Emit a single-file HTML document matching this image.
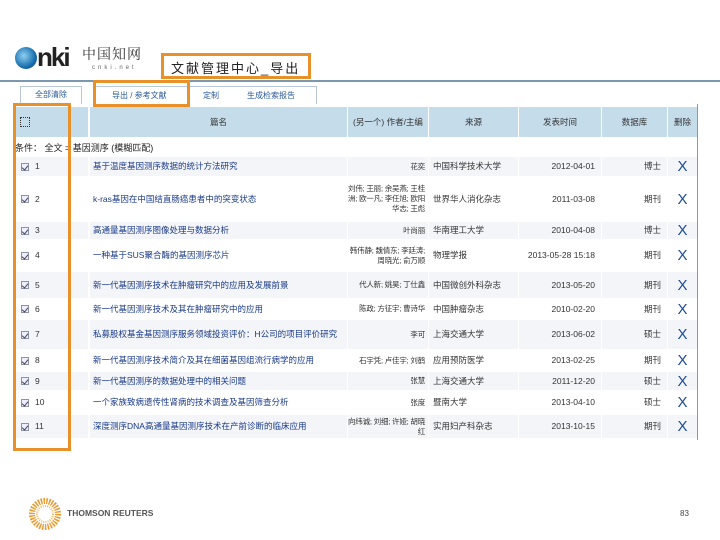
<!DOCTYPE html>
<html><head><meta charset="utf-8"><style>
*{margin:0;padding:0;box-sizing:border-box}
body{width:720px;height:540px;background:#fff;position:relative;overflow:hidden;font-family:"Liberation Sans","Noto Sans CJK SC",sans-serif;color:#333}
.a{position:absolute}
.t{font-size:9px;white-space:nowrap}
.ob{position:absolute;border:3px solid #e8902a}
.row{position:absolute;left:14px;width:683px}
.c{position:absolute;top:0;bottom:0;display:flex;align-items:center;font-size:8.5px;line-height:11px;overflow:hidden}
.au{font-size:7.5px;line-height:10px;letter-spacing:-0.2px}
.lnk{color:#1a3a8a}
.x{color:#1a4a9a;font-size:15px;justify-content:center}
.cb{width:8px;height:8px;border:1px solid #8a94a4;background:#eef;display:inline-block;margin-right:6px;position:relative}
.cb:after{content:"";position:absolute;left:1px;top:0;width:3px;height:5px;border-right:1px solid #445;border-bottom:1px solid #445;transform:rotate(40deg)}
</style></head><body>
<!-- logo -->
<div class="a" style="left:15px;top:47px;width:22px;height:22px;border-radius:50%;background:radial-gradient(circle at 40% 40%,#8fd0f0,#1a70b0 60%,#0b3a70)"></div>
<div class="a" style="left:37px;top:42px;font:bold 26px 'Liberation Sans',sans-serif;color:#222;letter-spacing:-2px">nki</div>
<div class="a" style="left:82px;top:44px;font-size:14px;color:#333;font-family:'Noto Serif CJK SC',serif;letter-spacing:1px">中国知网</div>
<div class="a" style="left:92px;top:65px;font-size:6px;color:#666;letter-spacing:3px">cnki.net</div>
<div class="a" style="left:171px;top:58px;font-size:13px;color:#222;letter-spacing:2px">文献管理中心_导出</div>
<div class="a" style="left:0;top:80px;width:720px;height:2px;background:#7a98b0"></div>
<!-- tabs -->
<div class="a" style="left:20px;top:86px;width:62px;height:18px;border:1px solid #b8c8d8;border-bottom:none;font-size:8px;text-align:center;line-height:16px;color:#2a5a9a">全部清除</div>
<div class="a" style="left:93px;top:86px;width:224px;height:18px;border:1px solid #b8c8d8;border-bottom:none"></div>
<div class="a t" style="left:112px;top:90px;font-size:8px;color:#2a5a9a">导出 / 参考文献</div>
<div class="a t" style="left:203px;top:90px;font-size:8px;color:#2a5a9a">定制</div>
<div class="a t" style="left:247px;top:90px;font-size:8px;color:#2a5a9a">生成检索报告</div>
<!-- right line -->
<div class="a" style="left:697px;top:104px;width:1px;height:336px;background:#8a9aaa"></div>
<!-- header -->
<div class="row" style="top:107px;height:30px">
<div class="c" style="left:0;width:74px;background:#c5dcea;padding-left:6px"><span style="width:10px;height:10px;border:1px dotted #333;display:inline-block"></span></div>
<div class="c" style="left:76px;width:257px;background:#c5dcea;justify-content:center">篇名</div>
<div class="c" style="left:334px;width:80px;background:#c5dcea;justify-content:center;text-align:center">(另一个) 作者/主编</div>
<div class="c" style="left:415px;width:89px;background:#c5dcea;justify-content:center">来源</div>
<div class="c" style="left:505px;width:82px;background:#c5dcea;justify-content:center">发表时间</div>
<div class="c" style="left:588px;width:65px;background:#c5dcea;justify-content:center">数据库</div>
<div class="c" style="left:654px;width:29px;background:#c5dcea;justify-content:center">删除</div>
</div>
<div class="a t" style="left:15px;top:141px;font-size:9px;color:#222">条件：  全文 = 基因测序 (模糊匹配)</div>
<div id="rows"></div>
<script>
var R=[
[157,21,"基于温度基因测序数据的统计方法研究","花奕","中国科学技术大学","2012-04-01","博士",1],
[178,44,"k-ras基因在中国结直肠癌患者中的突变状态","刘伟; 王丽; 余吴燕; 王桂洲; 欧一凡; 李任旭; 欧阳华志; 王彪","世界华人消化杂志","2011-03-08","期刊",0],
[222,19,"高通量基因测序图像处理与数据分析","叶尚丽","华南理工大学","2010-04-08","博士",1],
[241,31,"一种基于SUS聚合酶的基因测序芯片","韩伟静; 魏倩东; 李廷涛; 周晓光; 俞万顺","物理学报","2013-05-28 15:18","期刊",0],
[272,28,"新一代基因测序技术在肿瘤研究中的应用及发展前景","代人新; 姚昊; 丁仕鑫","中国微创外科杂志","2013-05-20","期刊",1],
[300,20,"新一代基因测序技术及其在肿瘤研究中的应用","陈政; 方征宇; 曹诗华","中国肿瘤杂志","2010-02-20","期刊",0],
[320,31,"私募股权基金基因测序服务领域投资评价：H公司的项目评价研究","李可","上海交通大学","2013-06-02","硕士",1],
[351,21,"新一代基因测序技术简介及其在细菌基因组流行病学的应用","石宇凭; 卢佳宇; 刘鹤","应用预防医学","2013-02-25","期刊",0],
[372,20,"新一代基因测序的数据处理中的相关问题","张慧","上海交通大学","2011-12-20","硕士",1],
[392,23,"一个家族致病遗传性肾病的技术调查及基因筛查分析","张度","暨南大学","2013-04-10","硕士",0],
[415,25,"深度测序DNA高通量基因测序技术在产前诊断的临床应用","向纬诚; 刘细; 许娅; 胡晓红","实用妇产科杂志","2013-10-15","期刊",1]];
var h="";R.forEach(function(r,i){var bg=r[7]?"#f3f5f8":"#fff";var w=r[1]-2;
h+='<div class="row" style="top:'+r[0]+'px;height:'+w+'px">'+
'<div class="c" style="left:0;width:74px;background:'+bg+';padding-left:7px"><span class="cb"></span>'+(i+1)+'</div>'+
'<div class="c lnk" style="left:76px;width:257px;background:'+bg+';padding-left:3px">'+r[2]+'</div>'+
'<div class="c au" style="left:334px;width:80px;background:'+bg+';justify-content:flex-end;text-align:right;padding-right:3px">'+r[3]+'</div>'+
'<div class="c" style="left:415px;width:89px;background:'+bg+';padding-left:4px">'+r[4]+'</div>'+
'<div class="c" style="left:505px;width:82px;background:'+bg+';justify-content:flex-end;padding-right:6px">'+r[5]+'</div>'+
'<div class="c" style="left:588px;width:65px;background:'+bg+';justify-content:flex-end;padding-right:6px">'+r[6]+'</div>'+
'<div class="c x" style="left:654px;width:29px;background:'+bg+'">X</div></div>';});
document.getElementById("rows").innerHTML=h;
</script>
<!-- orange boxes -->
<div class="ob" style="left:161px;top:53px;width:150px;height:26px"></div>
<div class="ob" style="left:93px;top:80px;width:97px;height:27px"></div>
<div class="ob" style="left:13px;top:103px;width:58px;height:348px"></div>
<!-- footer logo -->
<svg class="a" style="left:28px;top:497px" width="34" height="34" viewBox="0 0 34 34">
<circle cx="17" cy="17" r="13" fill="none" stroke="#e89a30" stroke-width="6" stroke-dasharray="1.5 1.2"/>
<circle cx="17" cy="17" r="8" fill="none" stroke="#f0b868" stroke-width="2" stroke-dasharray="1 1.2"/>
</svg>
<div class="a t" style="left:67px;top:508px;font-size:8.5px;font-weight:bold;color:#555">THOMSON REUTERS</div>
<div class="a t" style="left:680px;top:509px;font-size:8px;color:#444">83</div>
</body></html>
